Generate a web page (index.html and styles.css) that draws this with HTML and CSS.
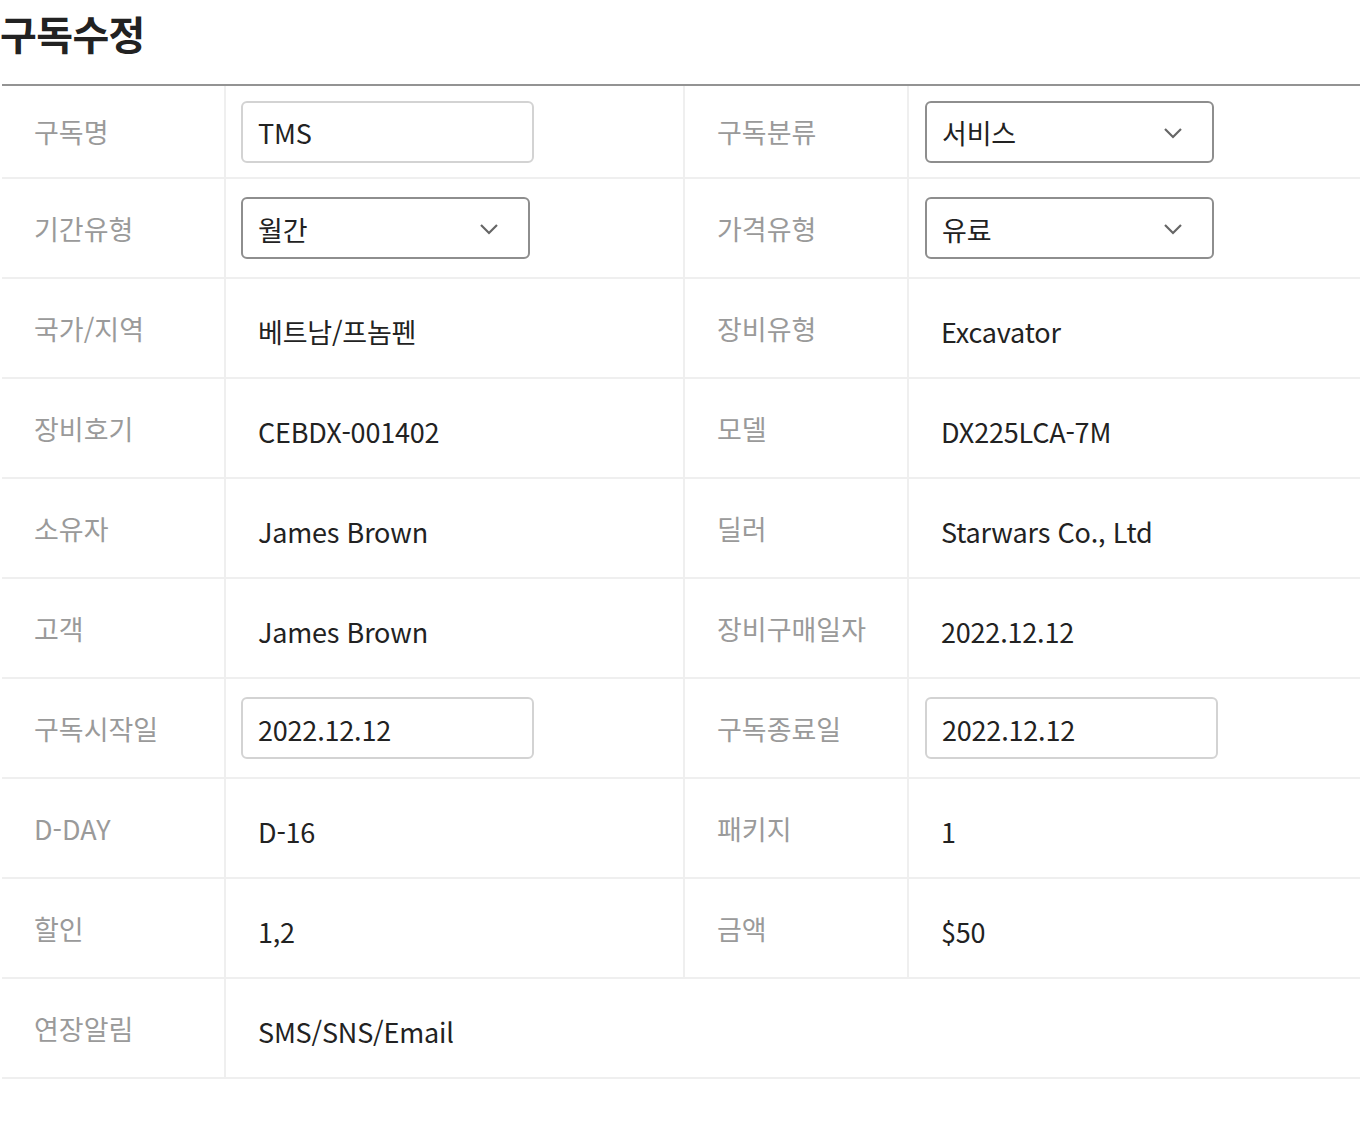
FILE: index.html
```html
<!DOCTYPE html>
<html lang="ko">
<head>
<meta charset="utf-8">
<title>구독수정</title>
<link rel="stylesheet" href="styles.css">
</head>
<body>
<div class="page">
  <h1 class="title">구독수정</h1>
  <div class="table">
    <div class="row first">
      <div class="label">구독명</div>
      <div class="value sep"><div class="field input">TMS</div></div>
      <div class="label">구독분류</div>
      <div class="value right"><div class="field select"><span>서비스</span><svg class="chev" width="20" height="12" viewBox="0 0 20 12"><path d="M2 2 L10 10 L18 2" fill="none" stroke="#666" stroke-width="2.2"/></svg></div></div>
    </div>
    <div class="row">
      <div class="label">기간유형</div>
      <div class="value sep"><div class="field select"><span>월간</span><svg class="chev" width="20" height="12" viewBox="0 0 20 12"><path d="M2 2 L10 10 L18 2" fill="none" stroke="#666" stroke-width="2.2"/></svg></div></div>
      <div class="label">가격유형</div>
      <div class="value right"><div class="field select"><span>유료</span><svg class="chev" width="20" height="12" viewBox="0 0 20 12"><path d="M2 2 L10 10 L18 2" fill="none" stroke="#666" stroke-width="2.2"/></svg></div></div>
    </div>
    <div class="row">
      <div class="label">국가/지역</div>
      <div class="value sep text">베트남/프놈펜</div>
      <div class="label">장비유형</div>
      <div class="value text">Excavator</div>
    </div>
    <div class="row">
      <div class="label">장비호기</div>
      <div class="value sep text">CEBDX-001402</div>
      <div class="label">모델</div>
      <div class="value text">DX225LCA-7M</div>
    </div>
    <div class="row">
      <div class="label">소유자</div>
      <div class="value sep text">James Brown</div>
      <div class="label">딜러</div>
      <div class="value text">Starwars Co., Ltd</div>
    </div>
    <div class="row">
      <div class="label">고객</div>
      <div class="value sep text">James Brown</div>
      <div class="label">장비구매일자</div>
      <div class="value text">2022.12.12</div>
    </div>
    <div class="row">
      <div class="label">구독시작일</div>
      <div class="value sep"><div class="field input">2022.12.12</div></div>
      <div class="label">구독종료일</div>
      <div class="value right"><div class="field input">2022.12.12</div></div>
    </div>
    <div class="row">
      <div class="label">D-DAY</div>
      <div class="value sep text">D-16</div>
      <div class="label">패키지</div>
      <div class="value text">1</div>
    </div>
    <div class="row">
      <div class="label">할인</div>
      <div class="value sep text">1,2</div>
      <div class="label">금액</div>
      <div class="value text">$50</div>
    </div>
    <div class="row last">
      <div class="label">연장알림</div>
      <div class="value text">SMS/SNS/Email</div>
      <div class="empty"></div>
    </div>
  </div>
</div>
</body>
</html>
```
FILE: styles.css
```css
html, body {
  margin: 0;
  padding: 0;
  background: #fff;
}

body {
  font-family: "Noto Sans CJK KR", "Noto Sans", sans-serif;
  color: #222;
}

.page {
  margin-left: 2px;
  width: 1358px;
}

.title {
  margin: 0 0 0 -2px;
  height: 84px;
  box-sizing: border-box;
  padding-top: 3px;
  font-size: 40px;
  font-weight: 700;
  line-height: 60px;
  color: #222;
  letter-spacing: -0.6px;
}

.table {
  border-top: 2px solid #939393;
}

.row {
  display: grid;
  grid-template-columns: 224px 459px 224px 451px;
  height: 100px;
  border-bottom: 2px solid #efefef;
  box-sizing: border-box;
}

.row.first {
  height: 93px;
}

.row.last {
  grid-template-columns: 224px 459px 675px;
}

.label {
  display: flex;
  align-items: center;
  padding-left: 32px;
  border-right: 2px solid #efefef;
  font-size: 27px;
  color: #9a9a9a;
}

.value {
  display: flex;
  align-items: center;
  padding-left: 15px;
  font-size: 27px;
  letter-spacing: -0.2px;
  color: #222;
}

.value.right {
  padding-left: 16px;
}

.value.sep {
  border-right: 2px solid #efefef;
}

.value.text {
  padding-left: 32px;
  padding-top: 6px;
}

.row.last .value {
  border-right: 0;
}

.field {
  box-sizing: border-box;
  height: 62px;
  border-radius: 6px;
  display: flex;
  align-items: center;
  padding-left: 15px;
  padding-top: 2px;
  font-size: 27px;
  color: #222;
}

.input {
  width: 293px;
  border: 2px solid #d3d3d3;
}

.select {
  width: 289px;
  border: 2px solid #8e8e8e;
  justify-content: space-between;
  padding-right: 29px;
}

.chev {
  display: block;
}
```
